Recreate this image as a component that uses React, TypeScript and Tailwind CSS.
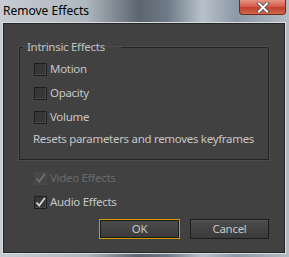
import React from "react";

const font = { fontFamily: '"Noto Sans", "Liberation Sans", sans-serif' };
const txt = "text-[11.5px] tracking-[-0.3px] leading-[16px] whitespace-nowrap";

function Check({ checked, disabled }: { checked?: boolean; disabled?: boolean }) {
  return (
    <div
      className={
        "w-[13px] h-[13px] border flex items-center justify-center shrink-0 " +
        (disabled
          ? "border-[#4a4a4a] bg-[#474747]"
          : "border-[#1f1f1f] bg-[#363636] shadow-[inset_-1px_-1px_0_#4a4a4a]")
      }
    >
      {checked && (
        <svg width="11" height="11" viewBox="0 0 11 11">
          <path
            d="M1.5 5.5 L4.2 8.5 L9.8 1"
            fill="none"
            stroke={disabled ? "#6e6e6e" : "#d6d6d6"}
            strokeWidth="1.8"
          />
        </svg>
      )}
    </div>
  );
}

function Row({ label, checked, disabled }: { label: string; checked?: boolean; disabled?: boolean }) {
  return (
    <div className="h-[24px] flex items-center gap-[3px]">
      <Check checked={checked} disabled={disabled} />
      <span className={txt + " " + (disabled ? "text-[#6a6a6a]" : "text-[#c6c6c6]")}>{label}</span>
    </div>
  );
}

export default function App() {
  return (
    <div
      className="w-[289px] h-[257px] flex flex-col bg-[linear-gradient(90deg,#c6ccd2_0%,#aeb6be_30%,#5c6670_48%,#6e7a86_58%,#b8c2cc_70%,#8c98a4_82%,#b4bcc4_100%)] overflow-hidden"
      style={font}
    >
      <div className="h-[22px] flex items-start justify-between pl-[3px] pr-[3px]">
        <span className="text-[12px] leading-[20px] text-black pt-[1px]">Remove Effects</span>
        <div className="w-[47px] h-[15px] rounded-b-[4px] border border-t-0 border-[#6a2a22] bg-[linear-gradient(180deg,#e69282_0%,#d4604c_45%,#c0402c_55%,#d06a50_100%)] flex items-center justify-center">
          <svg width="14" height="11" viewBox="0 0 14 11">
            <path d="M3 1.5 L11 9.5 M11 1.5 L3 9.5" stroke="#4a4a4a" strokeWidth="3.6" strokeLinecap="square" />
            <path d="M3 1.5 L11 9.5 M11 1.5 L3 9.5" stroke="#ffffff" strokeWidth="2" strokeLinecap="square" />
          </svg>
        </div>
      </div>
      <div className="mx-[2px] mr-[3px] mb-[3px] flex-1 border border-[#d8dee4] ">
        <div className="h-full border border-[#262626] bg-[#414141] flex flex-col px-[15px]">
          <fieldset className="mt-[15px] border border-[#252525] shadow-[0_0_0_1px_#4c4c4c] pb-[10px]">
            <legend className={"ml-[3px] pl-[4px] pr-[16px] text-[#c0c0c0] " + txt}>Intrinsic Effects</legend>
            <div className="pt-[2px] pl-[14px]">
              <Row label="Motion" />
              <Row label="Opacity" />
              <Row label="Volume" />
              <div className={"h-[20px] flex items-center -ml-[1px] text-[#c6c6c6] " + txt}>
                Resets parameters and removes keyframes
              </div>
            </div>
          </fieldset>
          <div className="pl-[15px] mt-[6px]">
            <Row label="Video Effects" checked disabled />
            <Row label="Audio Effects" checked />
          </div>
          <div className="flex justify-end gap-[10px] mt-[5px]">
            <button className={"w-[81px] h-[20px] border border-[#d49a00] bg-[linear-gradient(180deg,#4c4c4c,#3a3a3a)] shadow-[inset_0_0_0_1px_#1c1c1c] text-[#c6c6c6] " + txt}>
              OK
            </button>
            <button className={"w-[79px] h-[20px] border border-[#1c1c1c] bg-[linear-gradient(180deg,#4c4c4c,#3a3a3a)] shadow-[inset_0_1px_0_#5a5a5a] text-[#c6c6c6] " + txt}>
              Cancel
            </button>
          </div>
        </div>
      </div>
    </div>
  );
}
